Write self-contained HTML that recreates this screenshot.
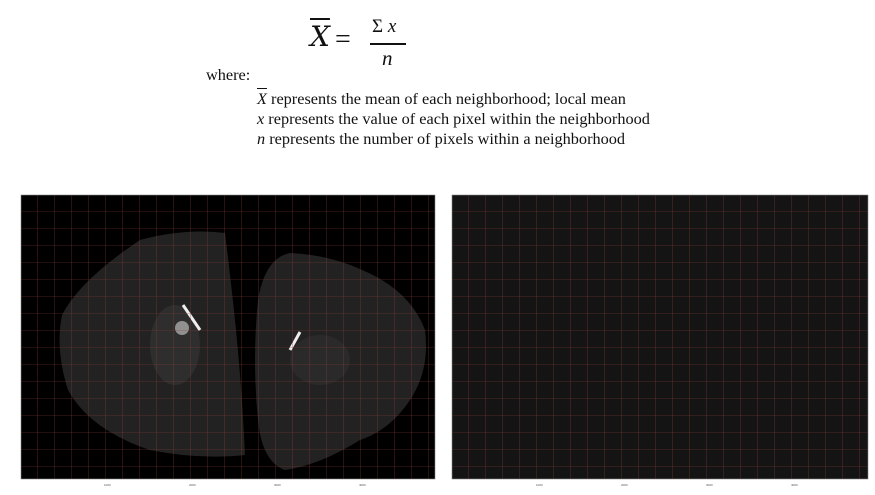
<!DOCTYPE html>
<html><head><meta charset="utf-8"><style>
body{margin:0;width:875px;height:495px;background:#fff;overflow:hidden;position:relative;font-family:"Liberation Serif",serif;}
.t{position:absolute;font-size:16.3px;color:#111;white-space:nowrap}
i{font-style:italic}
</style></head><body>
<div class="t" style="left:310px;top:20px;font-size:28px;font-family:'DejaVu Serif',serif;font-style:italic;text-decoration:overline;">X</div>
<div class="t" style="left:335px;top:24px;font-size:28px;">=</div>
<div class="t" style="left:372px;top:16px;font-size:19px;"><span style="font-style:normal">&Sigma;</span> <i>x</i></div>
<div style="position:absolute;left:370px;top:43px;width:36px;height:2px;background:#111"></div>
<div class="t" style="left:382px;top:46px;font-size:21px;"><i>n</i></div>
<div class="t" style="left:206px;top:65px;">where:</div>
<div class="t" style="left:257px;top:89px;"><i style="text-decoration:overline">X</i> represents the mean of each neighborhood; local mean</div>
<div class="t" style="left:257px;top:109px;"><i>x</i> represents the value of each pixel within the neighborhood</div>
<div class="t" style="left:257px;top:129px;"><i>n</i> represents the number of pixels within a neighborhood</div>

<svg style="position:absolute;left:0;top:0" width="875" height="495">
<defs>
<pattern id="g" x="21" y="195" width="17" height="17" patternUnits="userSpaceOnUse">
<path d="M17 0V17M0 17H17" stroke="#8a3c35" stroke-width="0.6" fill="none"/>
</pattern>
<pattern id="g2" x="452" y="195" width="17" height="17" patternUnits="userSpaceOnUse">
<path d="M17 0V17M0 17H17" stroke="#8a3c35" stroke-width="0.6" fill="none"/>
</pattern>
</defs>
<rect x="21" y="195" width="414" height="284" fill="#000" stroke="#888" stroke-width="0.6"/>
<path d="M140 240 Q185 228 225 233 Q232 290 236 330 Q242 390 245 455 Q200 460 150 450 Q90 430 68 390 Q55 350 62 315 Q80 280 140 240Z" fill="#222"/>
<path d="M290 253 Q330 255 362 270 Q410 290 425 330 Q430 370 410 400 Q390 430 360 440 Q320 465 285 470 Q262 462 258 420 Q252 360 258 300 Q265 258 290 253Z" fill="#222"/>
<ellipse cx="175" cy="345" rx="25" ry="40" fill="#333" opacity="0.7"/>
<ellipse cx="320" cy="360" rx="30" ry="25" fill="#2e2e2e" opacity="0.7"/>
<path d="M183 305 L200 330" stroke="#eee" stroke-width="3"/>
<circle cx="182" cy="328" r="7" fill="#bbb" opacity="0.7"/>
<path d="M290 350 L300 332" stroke="#eee" stroke-width="3"/>
<rect x="21" y="195" width="414" height="284" fill="url(#g)"/>
<rect x="452" y="195" width="416" height="284" fill="#141414" stroke="#888" stroke-width="0.6"/>
<rect x="452" y="195" width="416" height="284" fill="url(#g2)"/>
<g font-size="3" fill="#555" font-family="Liberation Sans">
<text x="104" y="486">1000</text><text x="189" y="486">2000</text><text x="274" y="486">3000</text><text x="359" y="486">4000</text>
<text x="536" y="486">1000</text><text x="621" y="486">2000</text><text x="706" y="486">3000</text><text x="791" y="486">4000</text>
</g>
</svg>
</body></html>
